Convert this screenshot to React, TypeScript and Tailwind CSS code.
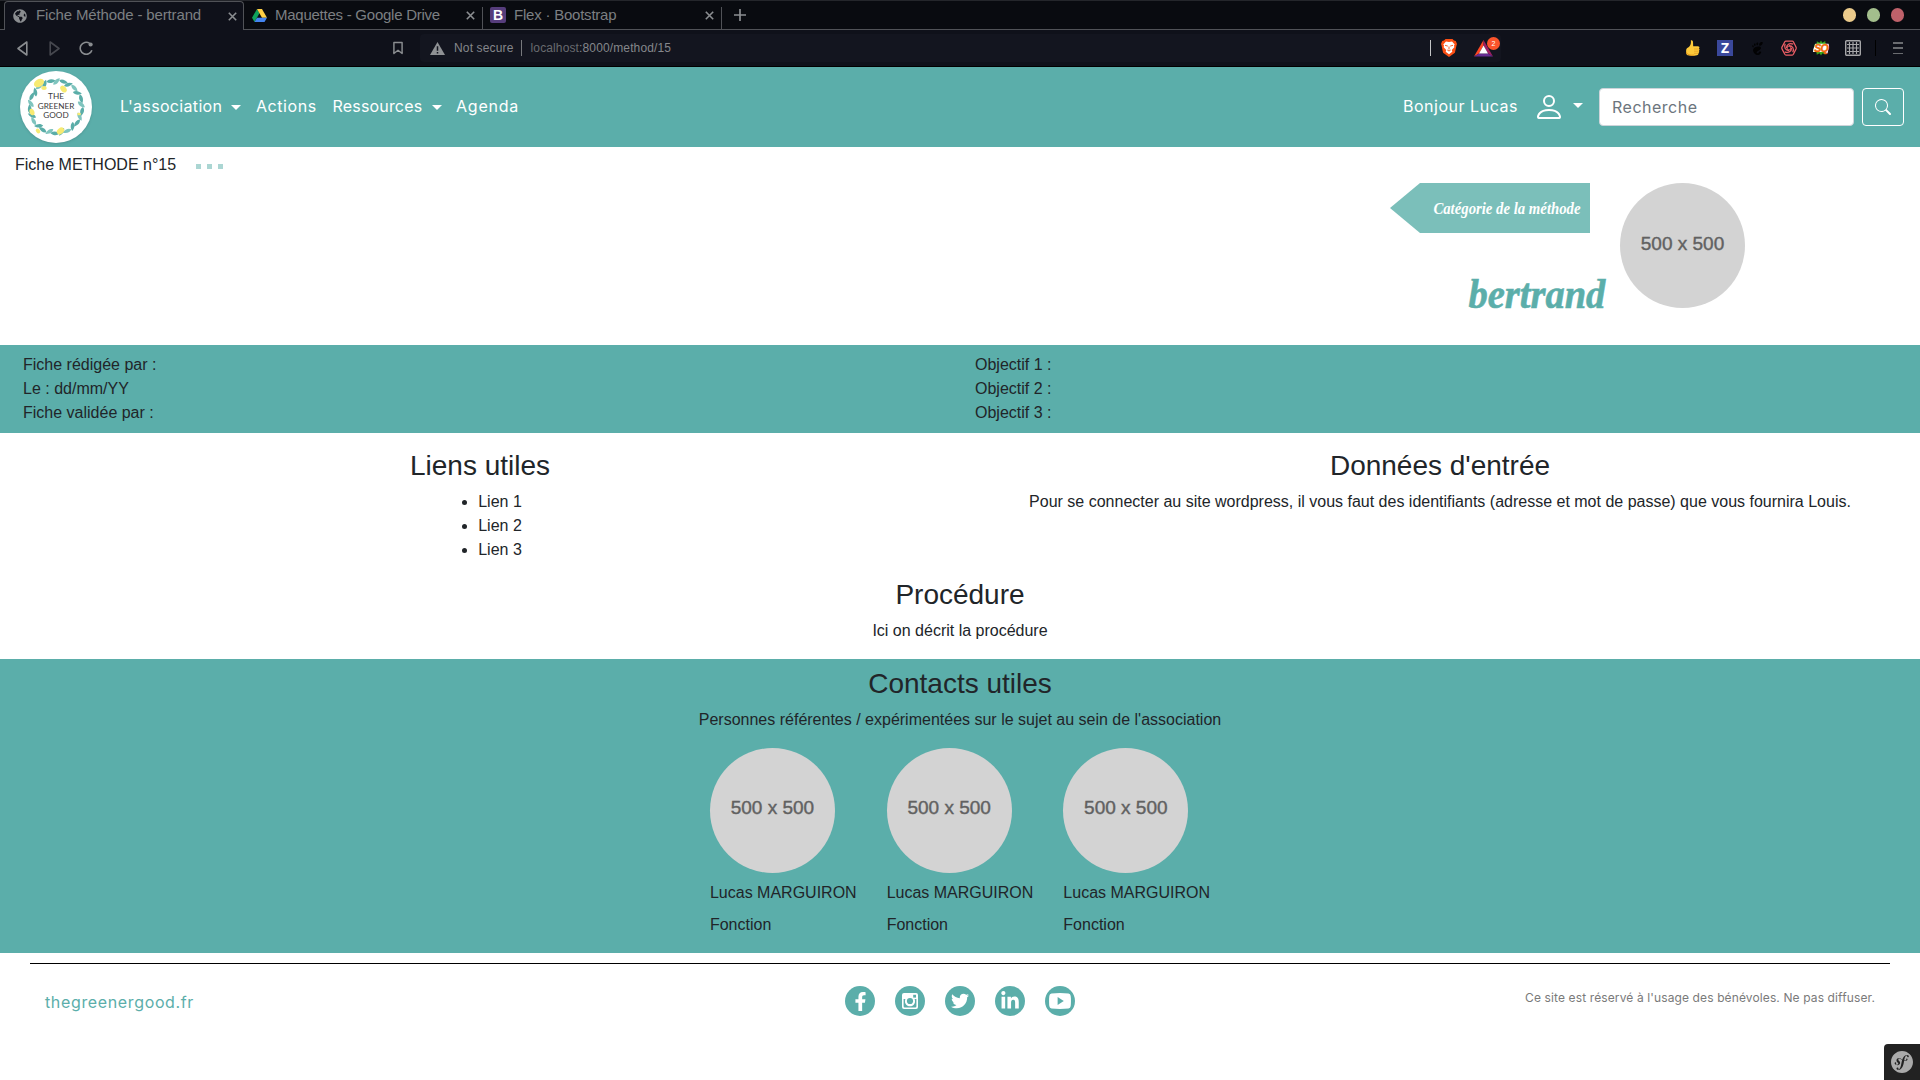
import type { ReactNode } from "react";
import { FaFacebookF, FaTwitter, FaLinkedinIn, FaGlobeAmericas } from "react-icons/fa";
import { BsPerson, BsSearch } from "react-icons/bs";
import { SiGnome, SiSymfony } from "react-icons/si";

const Cross = () => (
  <svg className="h-[9px] w-[9px] shrink-0" viewBox="0 0 9 9" stroke="#8b8e91" strokeWidth="1.6">
    <path d="M.8.8l7.4 7.4M8.2.8L.8 8.2" />
  </svg>
);

const Caret = () => (
  <span className="h-0 w-0 border-x-[5px] border-t-[5px] border-x-transparent border-t-white" />
);

function DriveIcon() {
  return (
    <svg className="h-[13px] w-[15px] shrink-0" viewBox="0 0 15 13">
      <path d="M5 0L0 8.7 2.5 13 7.5 4.3z" fill="#0fa15c" />
      <path d="M5 0h5l5 8.7h-5z" fill="#ffcf44" />
      <path d="M2.5 13L5 8.7h10L12.5 13z" fill="#4384f0" />
    </svg>
  );
}

function TabBar() {
  return (
    <div className="flex h-[30px] border-t border-[#24262b] bg-[#090b10] text-[15px] text-[#7c7f82]">
      <div className="w-1 border-b border-[#505257]" />
      <div className="flex w-[240px] items-center rounded-t border-x border-t border-[#505257] bg-[#0f111a] pr-[6px] pl-2">
        <FaGlobeAmericas className="mr-[9px] size-[14px] shrink-0 text-[#8a8d90]" />
        <span className="-mt-0.5 flex-1 whitespace-nowrap tracking-[-0.14px]">Fiche Méthode - bertrand</span>
        <Cross />
      </div>
      <div className="flex w-[238px] items-center border-b border-[#505257] pr-[7px] pl-[8px]">
        <DriveIcon />
        <span className="ml-[8px] flex-1 whitespace-nowrap tracking-[-0.25px]">Maquettes - Google Drive</span>
        <Cross />
      </div>
      <div className="flex w-[240px] items-center border-b border-[#505257]">
        <span className="mt-1.5 h-[22px] w-px bg-[#505257]" />
        <span className="mr-[8px] ml-[7px] flex size-4 items-center justify-center rounded-[2px] bg-[#563d7c] text-[14px] font-bold text-white">B</span>
        <span className="flex-1 whitespace-nowrap tracking-[-0.22px]">Flex · Bootstrap</span>
        <Cross />
        <span className="mt-1.5 ml-[7px] h-[22px] w-px bg-[#505257]" />
      </div>
      <div className="flex flex-1 items-center border-b border-[#505257] pr-[16px] pl-3">
        <svg className="size-3" viewBox="0 0 12 12" stroke="#8b8e91" strokeWidth="1.7">
          <path d="M6 0v12M0 6h12" />
        </svg>
        <div className="ml-auto flex gap-[10.5px]">
          <span className="size-[13.5px] rounded-full bg-[#ebcb8b]" />
          <span className="size-[13.5px] rounded-full bg-[#a3be8c]" />
          <span className="size-[13.5px] rounded-full bg-[#bf616a]" />
        </div>
      </div>
    </div>
  );
}

function ShieldIcon() {
  return (
    <svg className="h-[18px] w-4" viewBox="0 0 16 18">
      <path d="M4.500 0h7l1.500 1.600 1.800.3L16 5l-.5 1.500-1.600 7.200L8 18l-5.900-4.300L.5 6.500 0 5l1.200-3.100L3 1.600z" fill="#fb4f14" />
      <path d="M8 3l3-.6 2.700 3.200-.7 1 .3 1.600-2.500 2.800.5 1.700L8 15.200l-3.300-2.500.5-1.700-2.500-2.800.3-1.600-.7-1L5 2.400z" fill="#fff" />
      <path d="M4 6.300l2.800.8M12 6.300l-2.800.8M8 7.500v3M6.300 11L8 12l1.700-1" stroke="#fb4f14" strokeWidth=".9" fill="none" />
    </svg>
  );
}

function BatIcon() {
  return (
    <svg className="h-[17px] w-[19px]" viewBox="0 0 19 17">
      <path d="M9.5 0L0 16.5l5-3 4.500-8z" fill="#ff4724" />
      <path d="M9.5 0L19 16.5l-5-3-4.500-8z" fill="#9e1f63" />
      <path d="M0 16.5h19l-5-3H5z" fill="#662d91" />
      <path d="M9.5 5.5L5 13.5h9z" fill="#fff" />
    </svg>
  );
}

function ThumbIcon() {
  return (
    <svg className="h-4 w-[14px]" viewBox="0 0 14 16">
      <path d="M4.800.5C5.800-.3 6.900.4 7 2L7.200 6.300 12 6.300c1.600.1 1.800 1.700.9 2.300.9.700.7 1.800 0 2.200.6.700.3 1.700-.4 2.100.2 1-.3 2.100-1.500 2.300-3 .5-6.600.9-9.400.1C0 14.700 0 12.500.2 9.700.4 8.300 1.300 8 2.500 7.200 4.500 5.700 5.300 3 4.800.5z" fill="#fdc93a" />
      <path d="M8 9h4.800M8 11.200h4.700M8 13.300h4.200" stroke="#dd9220" strokeWidth=".6" />
      <path d="M.3 12c.5 2.700 4 3.400 8 3" stroke="#e89a1c" strokeWidth="1" fill="none" />
    </svg>
  );
}

function RoseIcon() {
  return (
    <svg className="size-4" viewBox="0 0 16 16" fill="none" stroke="#ee5f66" strokeWidth="1.25">
      <path d="M5 1h6.200q.8 0 1.200.7l2.600 5.400q.4.900 0 1.800l-2.600 5.400q-.4.700-1.200.7H5q-.8 0-1.200-.7L1 8.900q-.4-.9 0-1.800l2.800-5.400Q4.200 1 5 1z" />
      {[0, 90, 180, 270].map((a) => (
        <path key={a} d="M5.500 8C5.500 4.500 8.500 2.600 12.300 4.200" transform={`rotate(${a} 8 8)`} />
      ))}
      <circle cx="8" cy="8" r="2" strokeWidth="1" />
    </svg>
  );
}

function GridIcon() {
  return (
    <svg className="size-4" viewBox="0 0 16 16" fill="none" stroke="#a6a6a8">
      <rect x=".7" y=".7" width="14.6" height="14.6" rx="1" strokeWidth="1.4" />
      <path d="M4.500 2v12M8 2v12M11.500 2v12M2 4.500h12M2 8h12M2 11.500h12" strokeWidth="1.2" />
    </svg>
  );
}

function SqIcon() {
  return (
    <span className="relative flex h-4 w-4 items-center justify-center">
      <svg className="absolute inset-0 size-4" viewBox="0 0 17 16">
        <path d="M8.500 0l1.500 2.500L13 .5l.3 3 2.700.8-2 3.500 2 3.700-3 .5-.5 3-2.500-1.500L8.500 16 7 13.500 4 15.200l-.3-3-2.700-1 2-3.400L1 4.500l3-.8L4 .8l3 1.700z" fill="#39a51c" />
        <path d="M2.500 3.500h14l.5 2-1.500 8H14l-1-1.200H0l.3-3z" fill="#fff" />
      </svg>
      <span className="relative text-[10.5px] leading-none font-black text-[#f26a0a] italic tracking-[-0.8px] [-webkit-text-stroke:0.4px_#f26a0a]">SQ</span>
    </span>
  );
}

function Toolbar() {
  return (
    <div className="flex h-[37px] items-center border-b border-black bg-[#0f111a] pr-[17px] pl-[17px] text-[12px] text-[#85878b]">
      <svg className="h-[15px] w-[11px]" viewBox="0 0 11 15" fill="none" stroke="#8a8d90" strokeWidth="1.6" strokeLinejoin="round">
        <path d="M9.8 1v13L1 7.500z" />
      </svg>
      <svg className="ml-[21px] h-[15px] w-[11px]" viewBox="0 0 11 15" fill="none" stroke="#46484f" strokeWidth="1.6" strokeLinejoin="round">
        <path d="M1.200 1v13L10 7.500z" />
      </svg>
      <svg className="ml-[19px] size-[15px]" viewBox="0 0 15 15" fill="none" stroke="#8a8d90" strokeWidth="1.6">
        <path d="M12.900 9.200A6 6 0 1 1 10.500 2.200" />
        <circle cx="11.6" cy="3.5" r="2.1" fill="#8a8d90" stroke="none" />
      </svg>
      <svg className="ml-[299px] h-[14px] w-[10px]" viewBox="0 0 11 14" fill="none" stroke="#8a8d90" strokeWidth="1.6" strokeLinejoin="round">
        <path d="M1 1h9v12L5.500 9.500 1 13z" />
      </svg>
      <div className="ml-[17px] flex h-7 w-[1081px] items-center rounded bg-[#13151f] pr-0 pl-[10px]">
        <svg className="mr-[9px] h-[13px] w-[15px]" viewBox="0 0 15 13">
          <path d="M7.5 0L15 13H0z" fill="#8f9194" />
          <path d="M7.5 4.2v4.6M7.500 10v1.600" stroke="#13151f" strokeWidth="1.5" />
        </svg>
        <span className="tracking-[0.15px]">Not secure</span>
        <span className="mr-[9px] ml-[7px] h-4 w-px bg-[#77797d]" />
        <span className="tracking-[0.13px]"><span className="text-[#696b6f]">localhost</span>:8000/method/15</span>
        <span className="mr-[10px] ml-auto h-4 w-px bg-[#c4c5c7]" />
        <ShieldIcon />
        <span className="relative ml-[17px] h-[17px] w-[27px]">
          <BatIcon />
          <span className="absolute -top-[3px] left-[13px] flex size-[13px] items-center justify-center rounded-full bg-[#fb542b] text-[7px] leading-none text-white">2</span>
        </span>
      </div>
      <div className="ml-auto flex items-center">
        <ThumbIcon />
        <span className="ml-[17px] flex size-4 items-center justify-center bg-[#3a489b] font-['Open_Sans'] text-[14px] leading-none font-bold text-white">Z</span>
        <SiGnome className="ml-[18px] h-[15px] w-[13px] text-[#020203]" />
        <span className="ml-[17px]"><RoseIcon /></span>
        <span className="ml-[16px]"><SqIcon /></span>
        <span className="ml-[16px]"><GridIcon /></span>
        <span className="ml-[14px] h-4 w-px bg-black" />
        <span className="ml-[17px] flex h-3 w-[10px] flex-col justify-between">
          <i className="h-[1.5px] bg-[#6a6c70]" />
          <i className="h-[1.5px] bg-[#6a6c70]" />
          <i className="h-[1.5px] bg-[#6a6c70]" />
        </span>
      </div>
    </div>
  );
}

const LEAVES = Array.from({ length: 26 }, (_, i) => i);

function Logo() {
  return (
    <div className="relative flex size-[72px] shrink-0 flex-col items-center justify-center rounded-full bg-white pb-px font-['Lato'] text-[8.2px] leading-[9.7px] text-[#3a3a3a] shadow-sm">
      <svg className="absolute inset-0 size-[72px]" viewBox="-36 -36 72 72">
        {LEAVES.map((i) => (
          <path
            key={i}
            d="M0 0C1.500-2.500 5-3.500 9-1.500 6 1.500 2.500 2 0 0z"
            fill={i % 3 === 1 ? "#7fc4be" : "#5aada8"}
            transform={`rotate(${i * 13.85}) translate(${i % 2 ? 22.5 : 27} 0) rotate(${i % 2 ? 62 : 112})`}
          />
        ))}
        {[[-17, -24, 4.5, -30], [-12, -19, 2.3, 0], [7.5, -18, 3.2, 50], [-24, 5, 2.8, 70], [4.5, 24, 3.4, -40], [-18, 24, 2.2, 50], [23, 7, 1.5, 0]].map(([x, y, r, a]) => (
          <ellipse key={x} rx={r * 1.2} ry={r * 0.85} fill="#f7ea72" transform={`translate(${x} ${y}) rotate(${a})`} />
        ))}
      </svg>
      <span className="relative">THE</span>
      <span className="relative">GREENER</span>
      <span className="relative">GOOD</span>
    </div>
  );
}

function Navbar() {
  return (
    <nav className="flex h-20 items-center bg-[#5baeaa] pr-4 pl-5 font-['Inter'] text-white">
      <Logo />
      <div className="ml-7 flex w-[136px] items-center pr-[15.5px]">
        <span className="-mt-0.5 flex-1 tracking-[0.33px]">L'association</span>
        <Caret />
      </div>
      <span className="-mt-0.5 w-[76.5px] tracking-[0.55px]">Actions</span>
      <div className="flex w-[123.500px] items-center pr-[14.5px]">
        <span className="-mt-0.5 flex-1 tracking-[0.18px]">Ressources</span>
        <Caret />
      </div>
      <span className="-mt-0.5 tracking-[0.78px]">Agenda</span>
      <span className="-mt-0.5 ml-auto tracking-[0.53px]">Bonjour Lucas</span>
      <BsPerson className="ml-[15px] size-8" />
      <span className="mr-4 mb-1 ml-2 flex"><Caret /></span>
      <div className="flex h-[38px] w-[255px] items-center rounded border border-[#ced4da] bg-white pl-3 tracking-[0.5px] text-[#6c757d]">Recherche</div>
      <div className="ml-2 flex h-[38px] w-[42px] items-center justify-center rounded border border-white">
        <BsSearch className="size-4" />
      </div>
    </nav>
  );
}

const Placeholder = () => (
  <div className="flex size-[125px] items-center justify-center rounded-full bg-[#d3d3d3] pb-[3px] text-[19px] whitespace-nowrap text-[#616161] [-webkit-text-stroke:0.4px_#616161]">
    500 x 500
  </div>
);

const Title = ({ children }: { children: ReactNode }) => (
  <h3 className="mb-[7px] text-center text-[28px] leading-[33.6px]">{children}</h3>
);

function Header() {
  return (
    <header className="h-[198px]">
      <div className="flex h-9 items-center pl-[15px]">
        <span>Fiche METHODE n°15</span>
        <span className="mt-[3px] ml-[20px] flex gap-[6px]">
          <i className="size-[5px] bg-[#abd6d3]" />
          <i className="size-[5px] bg-[#abd6d3]" />
          <i className="size-[5px] bg-[#abd6d3]" />
        </span>
      </div>
      <div className="flex justify-end pr-[175px]">
        <div className="mr-[15px] flex flex-col items-end">
          <div className="mr-[15px] flex h-[50px] w-[200px] items-center justify-end bg-[#7bbfba] pr-[10px] font-['Liberation_Serif'] text-[17.5px] font-bold whitespace-nowrap text-white italic [clip-path:polygon(0_50%,30px_0,100%_0,100%_100%,30px_100%)]">
            <span className="origin-right scale-x-[0.843]">Catégorie de la méthode</span>
          </div>
          <h1 className="mt-[33px] origin-right scale-x-[0.917] font-['Liberation_Serif'] text-[42px] leading-[56px] font-bold text-[#5baeaa] italic [-webkit-text-stroke:0.6px_#5baeaa]">bertrand</h1>
        </div>
        <Placeholder />
      </div>
    </header>
  );
}

function InstagramIcon() {
  return (
    <svg className="size-4" viewBox="0 0 16 16">
      <rect width="16" height="16" rx="2" fill="#fff" />
      <path d="M1.600 6v7.200q0 1.200 1.200 1.200h10.400q1.200 0 1.200-1.200V6h-2a5 5 0 1 1-8.800 0z" fill="#5baeaa" />
      <circle cx="8" cy="8" r="3.9" fill="none" stroke="#fff" strokeWidth="1.6" />
      <circle cx="8" cy="8" r="3.1" fill="#5baeaa" />
      <rect x="11.2" y="1.8" width="2.8" height="2.8" fill="#5baeaa" />
    </svg>
  );
}

function YoutubeIcon() {
  return (
    <svg className="h-4 w-[22px]" viewBox="0 0 22 16">
      <path d="M2.500.4Q11-.4 19.500.4 21.400.6 21.700 3q.5 5 0 10-.3 2.400-2.200 2.600-8.500.8-17 0Q.6 15.400.3 13q-.5-5 0-10Q.6.600 2.500.4z" fill="#fff" />
      <path d="M8.600 4v8l6.200-4z" fill="#5baeaa" />
    </svg>
  );
}

const SOCIAL = [
  { name: "facebook", icon: <FaFacebookF className="size-[19px]" /> },
  { name: "instagram", icon: <InstagramIcon /> },
  { name: "twitter", icon: <FaTwitter className="size-[18px]" /> },
  { name: "linkedin", icon: <FaLinkedinIn className="size-5" /> },
  { name: "youtube", icon: <YoutubeIcon /> },
];

export default function App() {
  return (
    <div className="flex h-[1080px] w-[1920px] flex-col overflow-hidden bg-white font-['Liberation_Sans',sans-serif] text-base text-[#212529]">
      <TabBar />
      <Toolbar />
      <Navbar />
      <Header />
      <section className="flex h-[88px] bg-[#5baeaa] pt-2 pl-[23px]">
        <div className="w-[952px]">
          <p>Fiche rédigée par :</p>
          <p>Le : dd/mm/YY</p>
          <p>Fiche validée par :</p>
        </div>
        <div>
          <p>Objectif 1 :</p>
          <p>Objectif 2 :</p>
          <p>Objectif 3 :</p>
        </div>
      </section>
      <section className="grid h-[145px] grid-cols-2 pt-4">
        <div className="flex flex-col items-center">
          <Title>Liens utiles</Title>
          <ul className="list-disc pl-10">
            <li>Lien 1</li>
            <li>Lien 2</li>
            <li>Lien 3</li>
          </ul>
        </div>
        <div className="text-center">
          <Title>Données d'entrée</Title>
          <p>Pour se connecter au site wordpress, il vous faut des identifiants (adresse et mot de passe) que vous fournira Louis.</p>
        </div>
      </section>
      <section className="h-[81px] text-center">
        <Title>Procédure</Title>
        <p>Ici on décrit la procédure</p>
      </section>
      <section className="h-[294px] bg-[#5baeaa] pt-2 text-center">
        <Title>Contacts utiles</Title>
        <p>Personnes référentes / expérimentées sur le sujet au sein de l'association</p>
        <div className="mt-4 flex justify-center gap-[30px] text-left">
          {[0, 1, 2].map((i) => (
            <div key={i}>
              <Placeholder />
              <p className="mt-2">Lucas MARGUIRON</p>
              <p className="mt-2">Fonction</p>
            </div>
          ))}
        </div>
      </section>
      <footer className="mx-[30px] mt-[10px] flex flex-1 border-t border-black font-['Inter']">
        <div className="flex-1 pt-[26px] pl-[15px] tracking-[0.64px] text-[#5baeaa]">thegreenergood.fr</div>
        <div className="flex gap-5 pt-[22px]">
          {SOCIAL.map((s) => (
            <span key={s.name} className="flex size-[30px] items-center justify-center rounded-full bg-[#5baeaa] text-white">{s.icon}</span>
          ))}
        </div>
        <div className="flex-1 pt-[25px] pr-[15px] text-right text-[12px] tracking-[0.12px] text-[#7a7a7a]">
          Ce site est réservé à l'usage des bénévoles. Ne pas diffuser.
        </div>
      </footer>
      <div className="flex size-9 items-center justify-center self-end rounded-tl bg-[#222]">
        <SiSymfony className="size-[22px] text-[#aaa]" />
      </div>
    </div>
  );
}
